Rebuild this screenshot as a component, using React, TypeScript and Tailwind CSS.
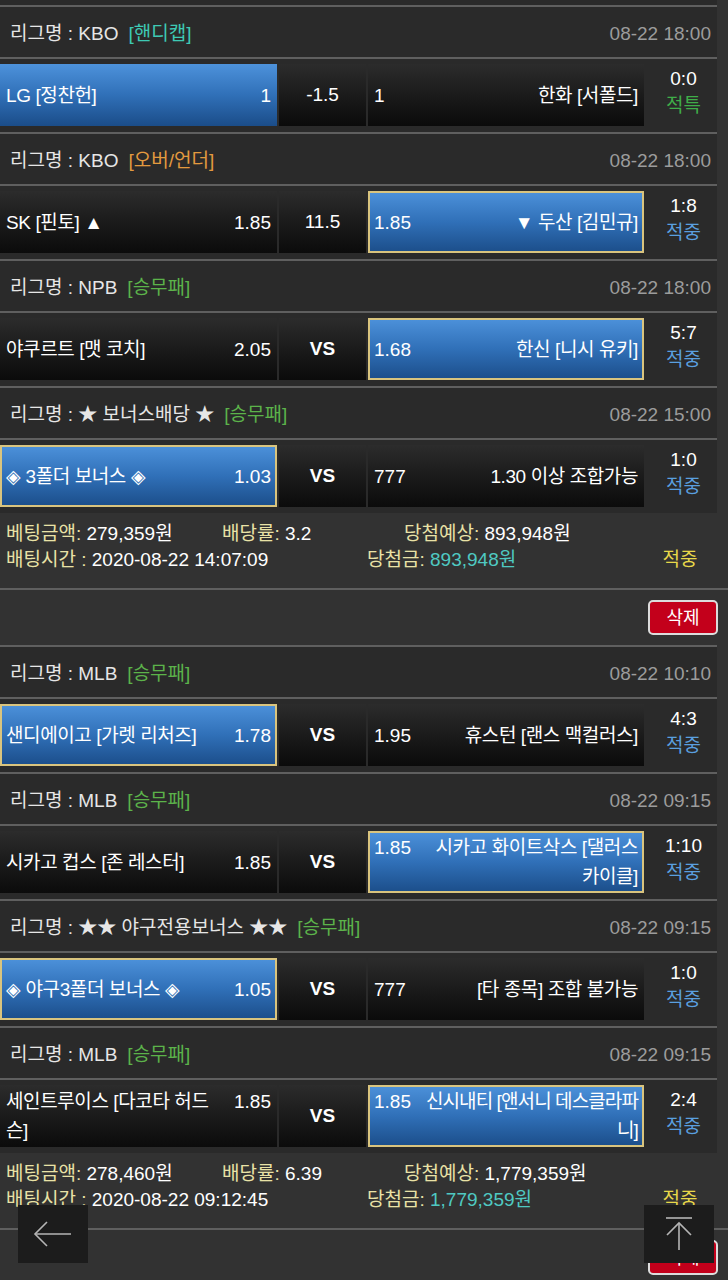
import React from "react";

type Game = {
  league: string;
  tag: string;
  tagColor: string;
  date: string;
  left: React.ReactNode;
  leftOdds: string;
  mid: string;
  midBold?: boolean;
  rightOdds: string;
  right: React.ReactNode;
  sel: "left" | "right";
  gold: boolean;
  score: string;
  result: string;
  resultColor: string;
  tight?: boolean;
};

const TEAL = "text-[#3ec9b4]";
const ORANGE = "text-[#e39a3f]";
const GREEN = "text-[#5cb34a]";
const BLUE = "text-[#5a9fdf]";

const bet1: Game[] = [
  {
    league: "KBO",
    tag: "핸디캡",
    tagColor: TEAL,
    date: "08-22 18:00",
    left: "LG [정찬헌]",
    leftOdds: "1",
    mid: "-1.5",
    rightOdds: "1",
    right: "한화 [서폴드]",
    sel: "left",
    gold: false,
    score: "0:0",
    result: "적특",
    resultColor: "text-[#3fae49]",
  },
  {
    league: "KBO",
    tag: "오버/언더",
    tagColor: ORANGE,
    date: "08-22 18:00",
    left: "SK [핀토] ▲",
    leftOdds: "1.85",
    mid: "11.5",
    rightOdds: "1.85",
    right: "▼ 두산 [김민규]",
    sel: "right",
    gold: true,
    score: "1:8",
    result: "적중",
    resultColor: BLUE,
  },
  {
    league: "NPB",
    tag: "승무패",
    tagColor: GREEN,
    date: "08-22 18:00",
    left: "야쿠르트 [맷 코치]",
    leftOdds: "2.05",
    mid: "VS",
    midBold: true,
    rightOdds: "1.68",
    right: "한신 [니시 유키]",
    sel: "right",
    gold: true,
    score: "5:7",
    result: "적중",
    resultColor: BLUE,
  },
  {
    league: "★ 보너스배당 ★",
    tag: "승무패",
    tagColor: GREEN,
    date: "08-22 15:00",
    left: "◈ 3폴더 보너스 ◈",
    leftOdds: "1.03",
    mid: "VS",
    midBold: true,
    rightOdds: "777",
    right: "1.30 이상 조합가능",
    sel: "left",
    gold: true,
    score: "1:0",
    result: "적중",
    resultColor: BLUE,
  },
];

const bet2: Game[] = [
  {
    league: "MLB",
    tag: "승무패",
    tagColor: GREEN,
    date: "08-22 10:10",
    left: "샌디에이고 [가렛 리처즈]",
    leftOdds: "1.78",
    mid: "VS",
    midBold: true,
    rightOdds: "1.95",
    right: "휴스턴 [랜스 맥컬러스]",
    sel: "left",
    gold: true,
    score: "4:3",
    result: "적중",
    resultColor: BLUE,
  },
  {
    league: "MLB",
    tag: "승무패",
    tagColor: GREEN,
    date: "08-22 09:15",
    left: "시카고 컵스 [존 레스터]",
    leftOdds: "1.85",
    mid: "VS",
    midBold: true,
    rightOdds: "1.85",
    right: (
      <>
        시카고 화이트삭스 [댈러스
        <br />
        카이클]
      </>
    ),
    sel: "right",
    gold: true,
    score: "1:10",
    result: "적중",
    resultColor: BLUE,
  },
  {
    league: "★★ 야구전용보너스 ★★",
    tag: "승무패",
    tagColor: GREEN,
    date: "08-22 09:15",
    left: "◈ 야구3폴더 보너스 ◈",
    leftOdds: "1.05",
    mid: "VS",
    midBold: true,
    rightOdds: "777",
    right: "[타 종목] 조합 불가능",
    sel: "left",
    gold: true,
    score: "1:0",
    result: "적중",
    resultColor: BLUE,
  },
  {
    league: "MLB",
    tag: "승무패",
    tagColor: GREEN,
    date: "08-22 09:15",
    left: (
      <>
        세인트루이스 [다코타 허드
        <br />
        슨]
      </>
    ),
    leftOdds: "1.85",
    mid: "VS",
    midBold: true,
    rightOdds: "1.85",
    right: (
      <>
        신시내티 [앤서니 데스클라파
        <br />
        니]
      </>
    ),
    sel: "right",
    gold: true,
    score: "2:4",
    result: "적중",
    resultColor: BLUE,
    tight: true,
  },
];

function cellBg(selected: boolean, gold: boolean) {
  if (selected) {
    return gold
      ? "bg-linear-to-b from-[#4d92db] via-[#3070b8] to-[#1b4d89] bg-origin-border border-2 border-[#d9c47e]"
      : "bg-linear-to-b from-[#4d92db] via-[#3070b8] to-[#1b4d89] bg-origin-border border-2 border-transparent";
  }
  return "bg-linear-to-b from-[#2c2c2c] to-[#0b0b0b] bg-origin-border border-2 border-transparent";
}

function GameBlock({ g }: { g: Game }) {
  return (
    <div className="border-t-2 border-[#5f5f5f] bg-[#2a2a2a]">
      <div className="h-[50px] flex items-center justify-between pl-[10px] pr-[6px] pt-[4px]">
        <div className="text-[#e6e6e6] whitespace-nowrap">
          리그명 : {g.league}
          <span className={`ml-[10px] ${g.tagColor}`}>[{g.tag}]</span>
        </div>
        <div className="text-[#9c9c9c]">{g.date}</div>
      </div>
      <div className="border-t-2 border-[#5f5f5f] pt-[5px] pb-[6px] flex">
        <div
          className={`w-[277px] min-h-[62px] flex items-center px-[4px] leading-[29px] ${cellBg(
            g.sel === "left",
            g.gold
          )}`}
        >
          <div className="flex w-full items-start justify-between gap-[6px]">
            <div className="whitespace-nowrap tracking-[-0.4px]">{g.left}</div>
            <div className="whitespace-nowrap">{g.leftOdds}</div>
          </div>
        </div>
        <div className="w-[87px] ml-[2px] min-h-[62px] flex items-center justify-center bg-linear-to-b from-[#2c2c2c] to-[#0b0b0b]">
          <span className={g.midBold ? "font-bold" : ""}>{g.mid}</span>
        </div>
        <div
          className={`w-[276px] ml-[2px] min-h-[62px] flex items-center px-[4px] leading-[29px] ${cellBg(
            g.sel === "right",
            g.gold
          )}`}
        >
          <div className="flex w-full items-start justify-between gap-[6px]">
            <div className="whitespace-nowrap">{g.rightOdds}</div>
            <div
              className={`whitespace-nowrap text-right ${
                g.tight ? "tracking-[-0.9px]" : "tracking-[-0.4px]"
              }`}
            >
              {g.right}
            </div>
          </div>
        </div>
        <div className="w-[73px] pl-[6px] pb-[6px] flex flex-col items-center justify-center leading-[27px]">
          <div className="text-white">{g.score}</div>
          <div className={g.resultColor}>{g.result}</div>
        </div>
      </div>
    </div>
  );
}

function Lbl({ children }: { children: React.ReactNode }) {
  return <span className="text-[#e9e2a6]">{children}</span>;
}

function BetInfo({
  amount,
  rate,
  expect,
  time,
  win,
}: {
  amount: string;
  rate: string;
  expect: string;
  time: string;
  win: string;
}) {
  return (
    <div className="pl-[6px] pt-[8px] pb-[15px] leading-[26px] whitespace-nowrap">
      <div className="flex">
        <span className="w-[216px]">
          <Lbl>베팅금액:</Lbl> {amount}
        </span>
        <span className="w-[182px]">
          <Lbl>배당률:</Lbl> {rate}
        </span>
        <span>
          <Lbl>당첨예상:</Lbl> {expect}
        </span>
      </div>
      <div className="flex">
        <span className="w-[361px]">
          <Lbl>배팅시간 :</Lbl> {time}
        </span>
        <span className="flex-1">
          <Lbl>당첨금:</Lbl> <span className="text-[#4fc9c2]">{win}</span>
        </span>
        <span className="w-[74px] mr-[11px] text-center text-[#e8d84a]">적중</span>
      </div>
    </div>
  );
}

function DeleteRow() {
  return (
    <div className="border-t-2 border-[#5f5f5f] flex justify-end pt-[10px] pb-[10px] pr-[10px]">
      <button className="w-[70px] h-[35px] rounded-[5px] border-2 border-[#dcdcdc] bg-[#c3001b] text-white text-[18px] leading-none">
        삭제
      </button>
    </div>
  );
}

export default function App() {
  return (
    <div className="min-h-screen bg-[#323232] text-white text-[19px] font-['Liberation_Sans','Noto_Sans_CJK_KR',sans-serif]">
      <div className="w-[717px] h-[5px] bg-[#2a2a2a]" />
      <div className="w-[717px]">
        {bet1.map((g, i) => (
          <GameBlock key={i} g={g} />
        ))}
      </div>
      <BetInfo
        amount="279,359원"
        rate="3.2"
        expect="893,948원"
        time="2020-08-22 14:07:09"
        win="893,948원"
      />
      <DeleteRow />
      <div className="w-[717px]">
        {bet2.map((g, i) => (
          <GameBlock key={i} g={g} />
        ))}
      </div>
      <BetInfo
        amount="278,460원"
        rate="6.39"
        expect="1,779,359원"
        time="2020-08-22 09:12:45"
        win="1,779,359원"
      />
      <DeleteRow />

      <button className="fixed left-[18px] bottom-[17px] w-[70px] h-[58px] bg-[#1c1c1c] flex items-center justify-center">
        <svg width="40" height="28" viewBox="0 0 40 28" fill="none" stroke="#b5b5b5" strokeWidth="1.6">
          <path d="M38 14H2" />
          <path d="M14 2L2 14L14 26" />
        </svg>
      </button>
      <button className="fixed left-[644px] bottom-[17px] w-[70px] h-[58px] bg-[#1c1c1c] flex items-center justify-center">
        <svg width="30" height="36" viewBox="0 0 30 36" fill="none" stroke="#b5b5b5" strokeWidth="1.6">
          <path d="M2 2H28" />
          <path d="M15 7V34" />
          <path d="M3 19L15 7L27 19" />
        </svg>
      </button>
    </div>
  );
}
